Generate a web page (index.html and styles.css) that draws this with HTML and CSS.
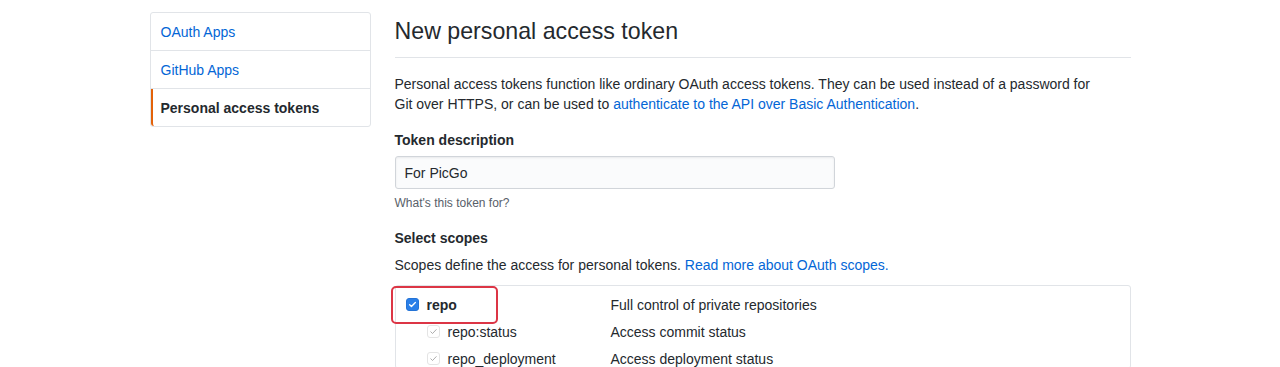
FILE: index.html
```
<!DOCTYPE html>
<html>
<head>
<meta charset="utf-8">
<link rel="stylesheet" href="styles.css">
</head>
<body>
<div class="page">
  <nav class="menu">
    <a class="menu-item">OAuth Apps</a>
    <a class="menu-item">GitHub Apps</a>
    <a class="menu-item selected">Personal access tokens</a>
  </nav>
  <main class="main">
    <h2 class="subhead">New personal access token</h2>
    <p class="intro">Personal access tokens function like ordinary OAuth access tokens. They can be used instead of a password for Git over HTTPS, or can be used to <a class="link">authenticate to the API over Basic Authentication</a>.</p>
    <div class="form-group">
      <label class="label">Token description</label>
      <div class="input">For PicGo</div>
      <p class="note">What's this token for?</p>
    </div>
    <div class="form-group scopes-group">
      <label class="label">Select scopes</label>
      <p class="scopes-desc">Scopes define the access for personal tokens. <a class="link">Read more about OAuth scopes.</a></p>
      <div class="scopes">
        <div class="scope-row parent">
          <div class="scope-name">
            <span class="cb checked"><svg viewBox="0 0 12 12" width="9" height="9"><path d="M2.2 6.3l2.4 2.4 5.2-5.4" fill="none" stroke="#fff" stroke-width="1.8" stroke-linecap="round" stroke-linejoin="round"/></svg></span>
            <strong>repo</strong>
          </div>
          <div class="scope-desc">Full control of private repositories</div>
          <div class="highlight"></div>
        </div>
        <div class="scope-row child">
          <div class="scope-name">
            <span class="cb disabled"><svg viewBox="0 0 12 12" width="9" height="9"><path d="M2.4 6.4l2.3 2.3 4.9-5.2" fill="none" stroke="#a3a3a3" stroke-width="1.2" stroke-linecap="round" stroke-linejoin="round"/></svg></span>
            <span>repo:status</span>
          </div>
          <div class="scope-desc">Access commit status</div>
        </div>
        <div class="scope-row child">
          <div class="scope-name">
            <span class="cb disabled"><svg viewBox="0 0 12 12" width="9" height="9"><path d="M2.4 6.4l2.3 2.3 4.9-5.2" fill="none" stroke="#a3a3a3" stroke-width="1.2" stroke-linecap="round" stroke-linejoin="round"/></svg></span>
            <span>repo_deployment</span>
          </div>
          <div class="scope-desc">Access deployment status</div>
        </div>
      </div>
    </div>
  </main>
</div>
</body>
</html>
```
FILE: styles.css
```
* { box-sizing: border-box; }
html, body { margin: 0; padding: 0; background: #fff; }
body {
  font-family: "Liberation Sans", Arial, sans-serif;
  font-size: 14px;
  line-height: 20px;
  color: #24292e;
  overflow: hidden;
  height: 367px;
}
.page {
  width: 981px;
  margin: 0 auto;
  display: flex;
  gap: 24px;
  padding-top: 12px;
}
.menu {
  width: 221px;
  flex: none;
  align-self: flex-start;
  border: 1px solid #e1e4e8;
  border-radius: 3px;
  display: flex;
  flex-direction: column;
}
.menu-item {
  display: block;
  padding: 9px 10px 8px 10px;
  height: 38px;
  color: #0366d6;
  border-bottom: 1px solid #e1e4e8;
}
.menu-item.selected {
  height: 37px;
  border-bottom: none;
  color: #24292e;
  font-weight: bold;
  border-left: 2px solid #e36209;
  padding-left: 8px;
  border-radius: 0 0 0 3px;
}
.main { flex: 1; min-width: 0; }
.subhead {
  margin: 1px 0 16px 0;
  padding-bottom: 8px;
  border-bottom: 1px solid #e1e4e8;
  font-size: 23.2px;
  line-height: 36px;
  font-weight: normal;
}
.intro { margin: 0 0 16px 0; padding-right: 30px; }
.link { color: #0366d6; }
.form-group { margin: 0 0 16px 0; }
.label { display: block; font-weight: bold; margin-bottom: 6px; }
.input {
  width: 440px;
  height: 33px;
  border: 1px solid #d1d5da;
  border-radius: 3px;
  padding: 6px 9px;
  background: #fafbfc;
  box-shadow: inset 0 1px 2px rgba(27,31,35,0.075);
}
.note {
  margin: 5px 0 0 0;
  font-size: 12px;
  line-height: 18px;
  color: #586069;
}
.scopes-group .label { margin-bottom: 7px; }
.scopes-desc { margin: 0 0 10px 0; }
.scopes {
  border: 1px solid #e1e4e8;
  border-radius: 3px;
  padding-top: 5px;
  height: 84px;
}
.scope-row {
  position: relative;
  display: flex;
  align-items: center;
  height: 27px;
}
.scope-name {
  width: 215px;
  flex: none;
  display: flex;
  align-items: center;
  gap: 8px;
}
.parent .scope-name { padding-left: 10px; }
.child .scope-name { padding-left: 31px; }
.scope-desc { color: #24292e; }
.cb {
  width: 13px;
  height: 13px;
  border-radius: 3px;
  display: inline-flex;
  align-items: center;
  justify-content: center;
  flex: none;
}
.cb.checked { background: #2a7fe8; border: 1px solid #2473d6; }
.cb.disabled { background: #fff; border: 1px solid #e4e4e4; }
.highlight {
  position: absolute;
  left: -5px;
  top: -5px;
  width: 107px;
  height: 38px;
  border: 2px solid #dc3545;
  border-radius: 5px;
  pointer-events: none;
}
```
